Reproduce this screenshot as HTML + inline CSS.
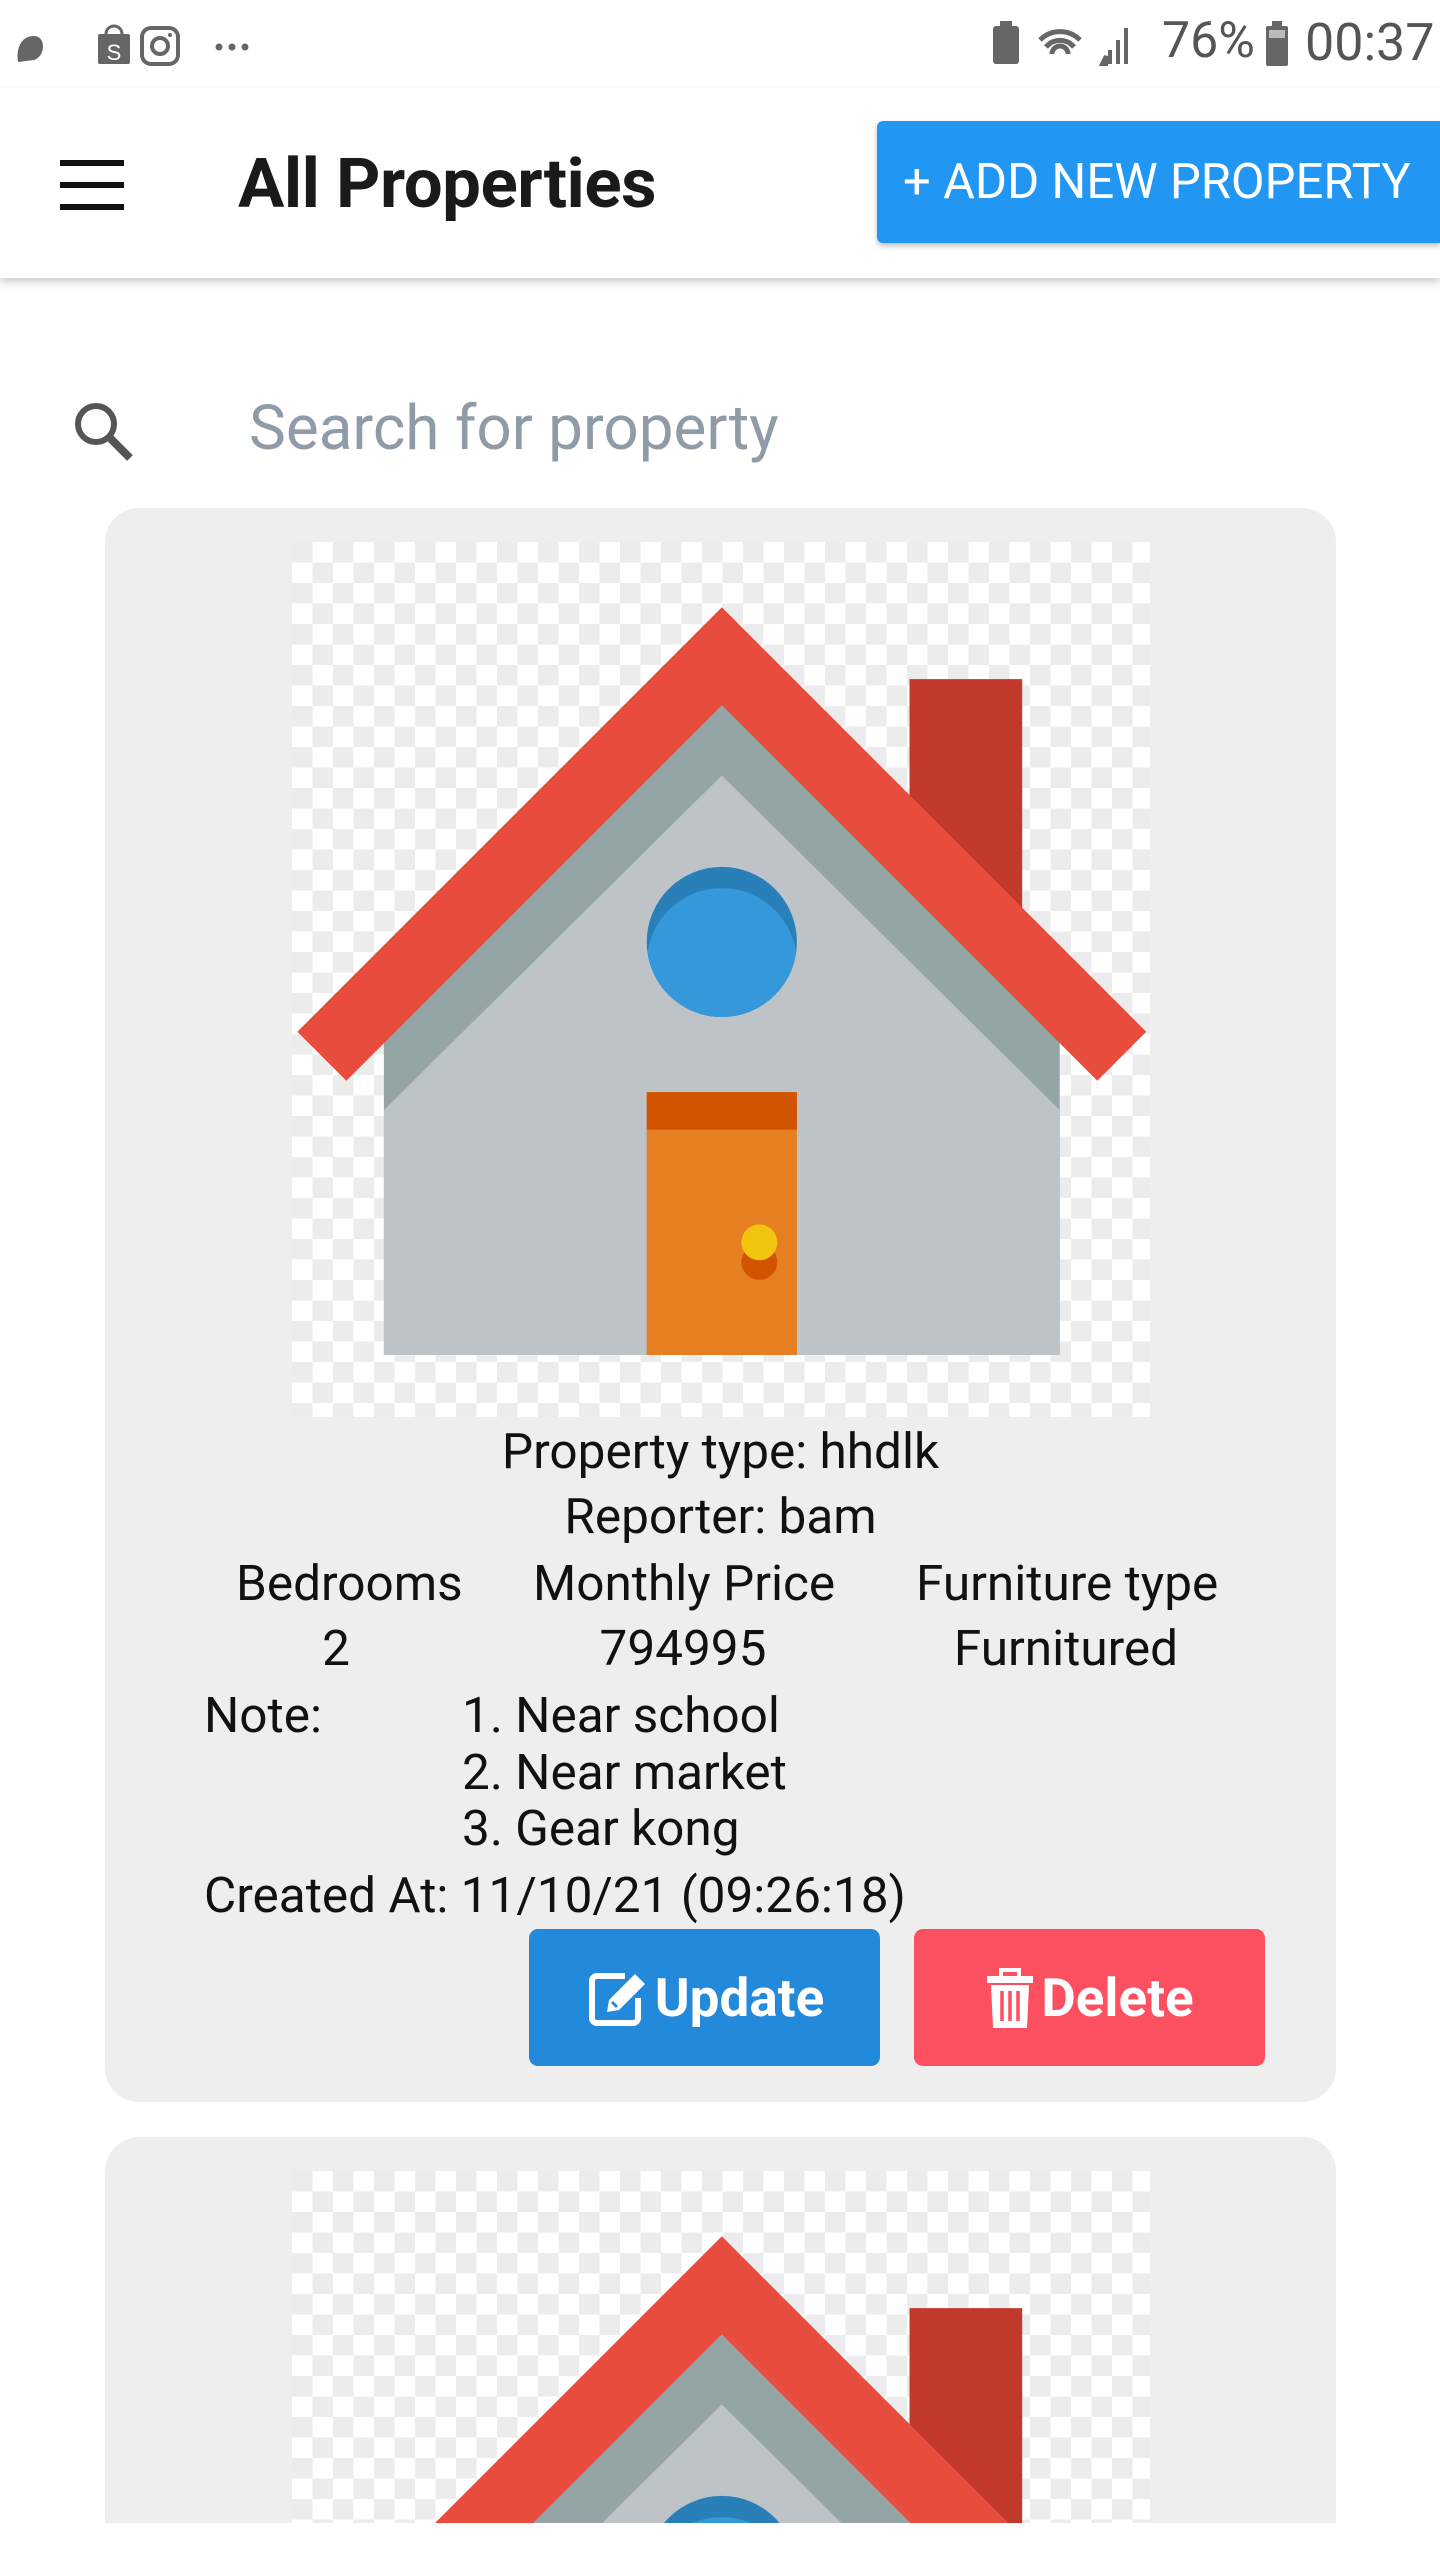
<!DOCTYPE html>
<html><head><meta charset="utf-8"><style>
*{margin:0;padding:0;box-sizing:border-box}
html,body{width:1440px;height:2560px;overflow:hidden}
body{background:#fff;position:relative;font-family:"Roboto","Liberation Sans",sans-serif;color:#111}
.a{position:absolute;white-space:nowrap}
.card{position:absolute;left:105px;width:1231px;background:#eeeeee;border-radius:34px;overflow:hidden}
.chk{position:absolute;left:187px;width:858px;height:875px;background-color:#fff;background-image:linear-gradient(45deg,#ececec 25%,transparent 25%,transparent 75%,#ececec 75%),linear-gradient(45deg,#ececec 25%,transparent 25%,transparent 75%,#ececec 75%);background-size:41px 41px;background-position:20.5px 0,0 20.5px}
.t{font-size:49.5px;color:#111}
.btn{position:absolute;top:1421px;width:351px;height:137px;border-radius:9px;color:#fff;font-size:53px;font-weight:bold;display:flex;align-items:center;justify-content:center;gap:6px}
</style></head><body>
<svg class="a" style="left:14px;top:22px" width="260" height="44" viewBox="0 0 260 44">
<path d="M4 40 C2 28 6 14 20 14 C32 14 32 34 20 38 Z" fill="#666"/>
<rect x="84" y="12" width="32" height="30" rx="2" fill="#666"/><path d="M92 12 a8 8 0 0 1 16 0" stroke="#666" stroke-width="3" fill="none"/>
<text x="100" y="38" font-size="22" fill="#fff" text-anchor="middle" font-family="Liberation Sans">S</text>
<rect x="128" y="6" width="36" height="36" rx="9" fill="none" stroke="#666" stroke-width="4"/><circle cx="146" cy="24" r="8" fill="none" stroke="#666" stroke-width="4"/><circle cx="156" cy="13" r="2" fill="#666"/>
<circle cx="205" cy="25" r="3.5" fill="#666"/><circle cx="218" cy="25" r="3.5" fill="#666"/><circle cx="231" cy="25" r="3.5" fill="#666"/>
</svg>
<svg class="a" style="left:990px;top:18px" width="160" height="50" viewBox="0 0 160 50">
<rect x="3" y="8" width="26" height="38" rx="3" fill="#666"/><rect x="10" y="3" width="12" height="6" fill="#666"/>
<path d="M50 22 a28 28 0 0 1 40 0 M56 29 a18 18 0 0 1 28 0 M62 36 a8 8 0 0 1 16 0" stroke="#666" stroke-width="5" fill="none"/>
<path d="M112 46 L116 46 L116 38 Z M120 46 V32 M128 46 V22 M136 46 V10" stroke="#666" stroke-width="4"/>
</svg>
<div class="a" style="left:1162px;top:12px;font-size:50px;color:#555">76%</div>
<svg class="a" style="left:1262px;top:20px" width="30" height="48"><rect x="4" y="6" width="22" height="40" rx="2" fill="#666"/><rect x="10" y="1" width="10" height="6" fill="#666"/><rect x="7" y="10" width="16" height="8" fill="#bbb"/></svg>
<div class="a" style="left:1305px;top:12px;font-size:52px;color:#555">00:37</div>
<div class="a" style="left:0;top:88px;width:1440px;height:190px;background:#fff;box-shadow:0 4px 8px rgba(0,0,0,0.2)"></div>
<div class="a" style="left:60px;top:160px;width:64px;height:6px;background:#111"></div>
<div class="a" style="left:60px;top:182px;width:64px;height:6px;background:#111"></div>
<div class="a" style="left:60px;top:204px;width:64px;height:6px;background:#111"></div>
<div class="a" style="left:238px;top:143px;font-size:69px;font-weight:bold;color:#1a1a1a;letter-spacing:-0.5px">All Properties</div>
<div class="a" style="left:877px;top:121px;width:563px;height:122px;background:#2196f3;border-radius:6px 0 0 6px;box-shadow:0 3px 6px rgba(0,0,0,0.25);color:#fff;font-size:49px;line-height:122px;padding-left:26px">+ ADD NEW PROPERTY</div>
<svg class="a" style="left:70px;top:398px" width="72" height="64" viewBox="0 0 72 64"><circle cx="26" cy="26" r="18" stroke="#555" stroke-width="6" fill="none"/><path d="M39 39 L60 60" stroke="#555" stroke-width="8"/></svg>
<div class="a" style="left:249px;top:392px;font-size:62px;color:#8f9ba6">Search for property</div>
<div class="card" style="top:508px;height:1594px">
<div class="chk" style="top:34px"></div>
<svg class="a" style="left:187px;top:34px" width="858" height="875" viewBox="179 332 525 536">
<defs><clipPath id="w1"><circle cx="442" cy="577" r="46"/></clipPath></defs>
<rect x="557" y="416" width="69" height="150" fill="#c0392b"/>
<polygon points="442,420 649,627 649,830 235,830 235,627" fill="#95a5a6"/>
<polygon points="442,475 649,680 649,830 235,830 235,680" fill="#bdc3c7"/>
<polygon points="442,372 702,632 672,662 442,432 212,662 182,632" fill="#e74c3c"/>
<circle cx="442" cy="577" r="46" fill="#2980b9"/><circle cx="442" cy="590" r="46" fill="#3498db" clip-path="url(#w1)"/>
<rect x="396" y="669" width="92" height="161" fill="#e67e22"/><rect x="396" y="669" width="92" height="23" fill="#d35400"/>
<circle cx="465" cy="773" r="11" fill="#d35400"/><circle cx="465" cy="761" r="11" fill="#f1c40f"/>
</svg>
<div class="a t" style="left:0;width:1231px;text-align:center;top:915px">Property type: hhdlk</div>
<div class="a t" style="left:0;width:1231px;text-align:center;top:980px">Reporter: bam</div>
<div class="a t" style="left:131px;width:200px;text-align:center;top:1047px">Bedrooms</div>
<div class="a t" style="left:131px;width:200px;text-align:center;top:1112px">2</div>
<div class="a t" style="left:428px;width:300px;text-align:center;top:1047px">Monthly Price</div>
<div class="a t" style="left:428px;width:300px;text-align:center;top:1112px">794995</div>
<div class="a t" style="left:811px;width:300px;text-align:center;top:1047px">Furniture type</div>
<div class="a t" style="left:811px;width:300px;text-align:center;top:1112px">Furnitured</div>
<div class="a t" style="left:99px;top:1179px">Note:</div>
<div class="a t" style="left:357px;top:1179px">1. Near school</div>
<div class="a t" style="left:357px;top:1236px">2. Near market</div>
<div class="a t" style="left:357px;top:1292px">3. Gear kong</div>
<div class="a t" style="left:99px;top:1359px">Created At: 11/10/21 (09:26:18)</div>
<div class="btn" style="left:424px;background:#2389db">
<svg width="64" height="64" viewBox="0 0 64 64"><path d="M40 10 H12 a5 5 0 0 0 -5 5 V52 a5 5 0 0 0 5 5 H48 a5 5 0 0 0 5 -5 V32" stroke="#fff" stroke-width="6" fill="none"/><path d="M22 46 L24 34 L50 8 L60 18 L34 44 Z" fill="#fff"/><path d="M27 36 L32 41" stroke="#2389db" stroke-width="3"/></svg>Update</div>
<div class="btn" style="left:809px;background:#fc4f60">
<svg width="50" height="64" viewBox="0 0 50 64"><rect x="2" y="10" width="46" height="7" fill="#fff"/><path d="M16 10 V4 H34 V10" stroke="#fff" stroke-width="4" fill="none"/><path d="M6 19 H44 L42 62 H8 Z" fill="#fff"/><path d="M17 25 V55 M25 25 V55 M33 25 V55" stroke="#fc4f60" stroke-width="3.5"/></svg>Delete</div>
</div>
<div class="card" style="top:2137px;height:386px;border-radius:34px 34px 0 0">
<div class="chk" style="top:34px"></div>
<svg class="a" style="left:187px;top:34px" width="858" height="875" viewBox="179 332 525 536">
<defs><clipPath id="w2"><circle cx="442" cy="577" r="46"/></clipPath></defs>
<rect x="557" y="416" width="69" height="150" fill="#c0392b"/>
<polygon points="442,420 649,627 649,830 235,830 235,627" fill="#95a5a6"/>
<polygon points="442,475 649,680 649,830 235,830 235,680" fill="#bdc3c7"/>
<polygon points="442,372 702,632 672,662 442,432 212,662 182,632" fill="#e74c3c"/>
<circle cx="442" cy="577" r="46" fill="#2980b9"/><circle cx="442" cy="590" r="46" fill="#3498db" clip-path="url(#w2)"/>
</svg>
</div>
</body></html>
